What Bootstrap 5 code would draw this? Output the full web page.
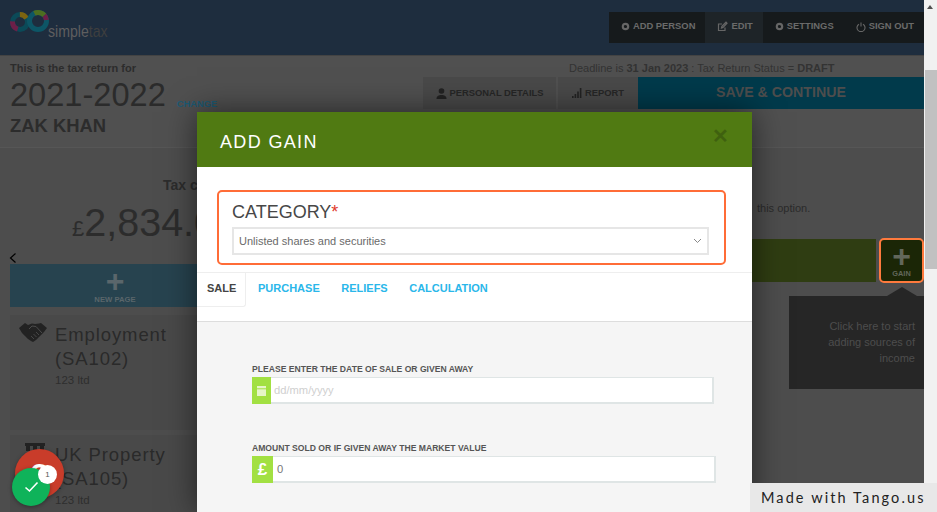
<!DOCTYPE html>
<html lang="en"><head><meta charset="utf-8"><title>Add gain</title>
<link rel="stylesheet" href="https://cdn.jsdelivr.net/npm/bootstrap@5.3.0/dist/css/bootstrap.min.css">
<style>
html,body{height:512px;overflow:hidden}
body{font-family:"Liberation Sans",Arial,sans-serif;background:#f1f1f1;color:#2c2c2c}
.stage{position:relative;width:937px;height:512px;overflow:hidden}
.dimmed{width:924px;height:512px;background:#4d4d4d}
.topbar{height:56px;background:#1e2d3e;border-bottom:1px solid #434343;padding:12px 0 0 10px}
.logo-txt{font-size:17px;color:#5e5e5e;line-height:1;margin:11px 0 0 -4px;transform:scaleX(.83);transform-origin:left;width:60px;white-space:nowrap}
.logo-txt span{color:#3f3f3f}
.topnav{height:31px;background:#161a1c;margin-left:auto}
.topnav a{display:flex;align-items:center;gap:3px;height:31px;padding:0 10px 2px 12px;color:#6a6a6a;font-size:9.4px;font-weight:700;text-decoration:none;white-space:nowrap}
.topnav a.cur{background:#1e2428}
.subhead{height:92px;border-bottom:1px solid #565656;background:#505050;padding:6px 0 0 10px}
.ret-for{font-size:11px;font-weight:700;line-height:13px}
.yr{font-size:32.6px;line-height:36px;color:#2b2b2b;margin-top:2px}
.chg{font-size:9.3px;font-weight:700;color:#1d5a74;margin-left:11px;position:relative;top:1px}
.who{font-size:18.4px;font-weight:700;line-height:20px;margin-top:-5px}
.sub-r{width:501px;margin-left:auto}
.deadline{font-size:11px;line-height:13px;color:#333;padding-left:146px;white-space:nowrap}
.act{height:32px;margin-top:2px}
.act div{display:flex;align-items:center;justify-content:center;gap:3px;background:#494949;font-size:9.4px;font-weight:700;color:#262626;height:32px;white-space:nowrap}
.act .pd{width:133px;margin-right:2px}
.act .rp{width:80px}
.act .sv{width:286px;background:#013a4b;color:#4d4d4d;font-size:14.2px}
.cols{position:relative;height:364px}
.leftcol{width:187px;margin-left:10px}
.taxt{font-size:14px;font-weight:700;line-height:16px;padding:29px 0 0 153px;margin-right:-4px;white-space:nowrap;overflow:hidden}
.amt{font-size:39.5px;line-height:44px;white-space:nowrap;padding-left:62px;margin-top:7px;color:#2c2c2c}
.amt small{font-size:22px}
.chev{height:14px;padding-top:1px;margin-left:-1px;position:relative;z-index:1;line-height:0}
.newpg{width:210px;height:43px;background:#27434f;color:#5a666b;text-align:center;font-size:7.7px;font-weight:700;line-height:8px;margin-top:-1px}
.plus{font-size:32px;line-height:26px;font-weight:700;display:block;padding-top:4px;height:32px}
.src{background:#494949;padding:8px 0 0 9px;margin-top:8px;height:115px;display:flex;gap:8px}
.src+.src{margin-top:5px}
.src h5{font-size:18.5px;letter-spacing:.9px;font-weight:400;line-height:24px;margin:0;color:#2a2a2a}
.src p{font-size:11.5px;margin:2px 0 0;color:#2e2e2e;line-height:14px}
.optn{position:absolute;left:757px;top:52px;font-size:11px;color:#2b2b2b}
.gbar{position:absolute;left:752px;top:91px;width:124px;height:43px;background:#2f3d12}
.gainb{position:absolute;left:879px;top:90px;width:45px;height:45px;background:#1b2606;border:2px solid #ff7a3d;border-radius:5px;text-align:center;color:#62675a;font-size:7.4px;font-weight:700;line-height:8px}
.gainb .plus{height:30px;padding-top:3px;color:#62675a}
.tip{position:absolute;left:789px;top:148px;width:135px;height:93px;background:#262626;color:#4d4d4d;font-size:11px;line-height:15.9px;text-align:right;padding:23px 9px 0 30px}
.tip::before{content:"";position:absolute;top:-9px;left:98px;border:solid transparent;border-width:0 15px 9px;border-bottom-color:#262626}
.sbar{position:absolute;left:924px;top:0;width:13px;height:512px;background:#f1f1f1}
.sbar i{position:absolute;left:1px;top:70px;width:12px;height:199px;background:#c1c1c1}
.sbar b{position:absolute;left:3px;top:5px;border:solid transparent;border-width:0 3.5px 4px;border-bottom-color:#505050}
.dlg{position:absolute;left:197px;top:112px;width:555px;height:400px;background:#fff;box-shadow:0 0 30px rgba(0,0,0,.55)}
.dlg-h{height:55px;background:#507a12;padding:20px 23px 0;color:#fff;font-size:18px;letter-spacing:1.35px;line-height:21px}
.dlg-h span{font-size:20px;color:#3f610f;letter-spacing:0;line-height:16px;margin-top:-4px;font-weight:700}
.catbox{margin:23px 26px 7px 20px;height:75px;border:2.5px solid #ff6c37;border-radius:5px;padding:10px 15px 0 13px}
.catl{font-size:18px;line-height:20px;color:#474747}
.catl em{color:#e0392b;font-style:normal}
.sel{height:28px;margin-top:5px;border:2px solid #e6e6e6;font-size:11px;color:#6a6a6a;padding:0 5px;display:flex;align-items:center;justify-content:space-between}
.tabsx{height:50px;border-top:1px solid #eee;border-bottom:1px solid #ddd;display:flex;align-items:flex-start;font-size:11px;font-weight:700}
.tabsx a{color:#2ab7ea;text-decoration:none;padding:9px 0 0;line-height:13px;margin-right:21.5px}
.tabsx .on{color:#444;width:49px;height:34px;border:1px solid #eee;border-width:0 1px 1px 0;border-radius:0 0 3px 0;padding:9px 0 0 10px;margin-right:12px;background:#fff}
.pane{background:#f5f5f5;height:190px;padding:42px 0 0 55px}
.lbl{font-size:8.6px;font-weight:700;color:#555;line-height:10px;margin-bottom:3px;white-space:nowrap}
.fld{height:27px;background:#fff;border:1px solid #dfe5e5;border-width:1px 2px 2px 1px;display:flex;align-items:center;font-size:11.2px}
.fld .ad{background:#a2e042;height:27px;margin:-1px 0 -2px -1px;color:#fff;display:flex;align-items:center;justify-content:center;flex:none}
.d1{width:462px;margin-bottom:39px}.d1 .ad{width:19px;margin-right:3px}.d1 span{color:#cfcfcf}
.d2{width:464px}.d2 .ad{width:21px;margin-right:4px;font-size:17px;font-weight:700}.d2 span{color:#777}
.tango{position:absolute;left:750px;top:483px;width:187px;height:29px;background:#e8e8e8;color:#222;font-family:Lato,sans-serif;font-size:14.5px;letter-spacing:2.1px;line-height:30px;padding-left:11px;white-space:nowrap}
.fabr,.fabg,.fabn{position:absolute;border-radius:50%}
.fabr{left:15px;top:449px;width:49px;height:49px;background:#c93c2a;box-shadow:0 1px 4px rgba(0,0,0,.3);color:#fff;font-size:30px;font-weight:700;line-height:49px;text-align:center}
.fabg{left:12px;top:468px;width:38px;height:38px;background:#0fb35a;box-shadow:0 1px 4px rgba(0,0,0,.35)}
.fabn{left:38px;top:465px;width:19px;height:19px;background:#fff;color:#555;font-size:8px;line-height:19px;text-align:center}
</style></head><body>
<div class="stage">
 <div class="dimmed">
  <div class="topbar d-flex align-items-start">
   <svg width="42" height="26" viewBox="0 0 42 26" fill="none" stroke-width="5" class="flex-shrink-0" style="margin-top:-2px"><circle cx="10" cy="12" r="7.5" stroke="#0b4a58"/><circle cx="10" cy="12" r="7.5" stroke="#6d1f48" stroke-dasharray="10 60" stroke-dashoffset="-14"/><circle cx="10" cy="12" r="7.5" stroke="#7d6410" stroke-dasharray="8 60" stroke-dashoffset="-35"/><circle cx="28" cy="11" r="8.5" stroke="#0d5666"/><circle cx="28" cy="11" r="8.5" stroke="#4d6e20" stroke-dasharray="11 60" stroke-dashoffset="-36"/><circle cx="28" cy="11" r="8.5" stroke="#6d1f48" stroke-dasharray="5 60" stroke-dashoffset="-47"/></svg>
   <div class="logo-txt">simple<span>tax</span></div>
   <nav class="topnav d-flex">
    <a href="#"><svg width="9" height="9" viewBox="0 0 10 10"><circle cx="5" cy="5" r="3" fill="none" stroke="#666" stroke-width="2.4"/></svg>ADD PERSON</a>
    <a href="#" class="cur"><svg width="11" height="11" viewBox="0 0 11 11" fill="none" stroke="#666" stroke-width="1.2"><path d="M8 6.5V9.5H1.5V3H5M4.5 7l.4-1.8L9 1.2l1 1-4 4.2z"/></svg>EDIT</a>
    <a href="#"><svg width="9" height="9" viewBox="0 0 10 10"><circle cx="5" cy="5" r="3" fill="none" stroke="#666" stroke-width="2.4"/></svg>SETTINGS</a>
    <a href="#"><svg width="10" height="10" viewBox="0 0 10 10" fill="none" stroke="#666" stroke-width="1.1"><path d="M3 2.2a4 4 0 1 0 4 0M5 .5V4.5"/></svg>SIGN OUT</a>
   </nav>
  </div>
  <div class="subhead d-flex">
   <div>
    <div class="ret-for">This is the tax return for</div>
    <div class="yr">2021-2022<span class="chg">CHANGE</span></div>
    <div class="who">ZAK KHAN</div>
   </div>
   <div class="sub-r">
    <div class="deadline">Deadline is <b>31 Jan 2023</b> : Tax Return Status = <b>DRAFT</b></div>
    <div class="act d-flex">
     <div class="pd"><svg width="11" height="11" viewBox="0 0 11 11" fill="#222"><circle cx="5.5" cy="3" r="2.8"/><path d="M0.5 11c0-3 2-4 5-4s5 1 5 4z"/></svg>PERSONAL DETAILS</div>
     <div class="rp"><svg width="10" height="10" viewBox="0 0 10 10" fill="#222"><rect x="0" y="8" width="1.6" height="2"/><rect x="2.6" y="6" width="1.6" height="4"/><rect x="5.2" y="3.5" width="1.6" height="6.5"/><rect x="7.8" y="0" width="1.6" height="10"/></svg>REPORT</div>
     <div class="sv">SAVE &amp; CONTINUE</div>
    </div>
   </div>
  </div>
  <div class="cols">
   <div class="leftcol">
    <div class="taxt">Tax calculation</div>
    <div class="amt"><small>£</small>2,834.00</div>
    <div class="chev"><svg width="8" height="12" viewBox="0 0 8 12" fill="none" stroke="#000" stroke-width="1.2"><path d="M6.5 1.5 1.5 6l5 4.5"/></svg></div>
    <div class="newpg"><span class="plus">+</span>NEW PAGE</div>
    <div class="src">
     <svg width="28" height="20" viewBox="0 0 28 20" fill="#222" class="flex-shrink-0"><path d="M0 5 6 0l3 2 4-1.500 3 .5 4-.5 2-.5 6 5-3 4-5 5-3 3-3 2-2-1-3-2-3-3-3-3z"/><path d="M10 6l3-3 4 .5 6 6.500" fill="none" stroke="#4b4b4b" stroke-width="1"/><path d="M12 13l3 3M14.500 11l3 3M17 9l3 3" fill="none" stroke="#4b4b4b" stroke-width=".9"/></svg>
     <div><h5>Employment (SA102)</h5><p>123 ltd</p></div>
    </div>
    <div class="src">
     <svg width="28" height="20" viewBox="0 0 28 20" fill="#222" class="flex-shrink-0"><rect x="6" y="0" width="20" height="3"/><rect x="7" y="3" width="4" height="5"/><rect x="14" y="3" width="4" height="5"/><rect x="21" y="3" width="4" height="5"/></svg>
     <div><h5>UK Property (SA105)</h5><p>123 ltd</p></div>
    </div>
   </div>
   <div class="optn">this option.</div>
   <div class="gbar"></div>
   <div class="gainb"><span class="plus">+</span>GAIN</div>
   <div class="tip">Click here to start adding sources of income</div>
  </div>
 </div>
 <div class="sbar"><b></b><i></i></div>
 <section class="dlg">
  <div class="dlg-h d-flex justify-content-between">ADD GAIN<span>✕</span></div>
  <div class="catbox">
   <div class="catl">CATEGORY<em>*</em></div>
   <div class="sel">Unlisted shares and securities<svg width="9" height="6" viewBox="0 0 9 6" fill="none" stroke="#888"><path d="M1 1l3.500 3.500L8 1"/></svg></div>
  </div>
  <div class="tabsx"><a href="#" class="on">SALE</a><a href="#">PURCHASE</a><a href="#">RELIEFS</a><a href="#">CALCULATION</a></div>
  <div class="pane">
   <div class="lbl">PLEASE ENTER THE DATE OF SALE OR GIVEN AWAY</div>
   <div class="fld d1"><div class="ad"><svg width="9" height="10" viewBox="0 0 9 10" fill="#e6f5c8"><rect width="9" height="2.3" y="0"/><rect width="9" height="6.7" y="3.3"/></svg></div><span>dd/mm/yyyy</span></div>
   <div class="lbl">AMOUNT SOLD OR IF GIVEN AWAY THE MARKET VALUE</div>
   <div class="fld d2"><div class="ad">£</div><span>0</span></div>
  </div>
 </section>
 <div class="tango">Made with Tango.us</div>
 <div class="fabr">?</div>
 <div class="fabg d-flex align-items-center justify-content-center"><svg width="15" height="12" viewBox="0 0 15 12" fill="none" stroke="#fff" stroke-width="1.6"><path d="M1.500 6.500 5.500 10 13.500 1.500"/></svg></div>
 <div class="fabn">1</div>
</div>
<script src="https://cdn.jsdelivr.net/npm/bootstrap@5.3.0/dist/js/bootstrap.bundle.min.js"></script>
</body></html>
